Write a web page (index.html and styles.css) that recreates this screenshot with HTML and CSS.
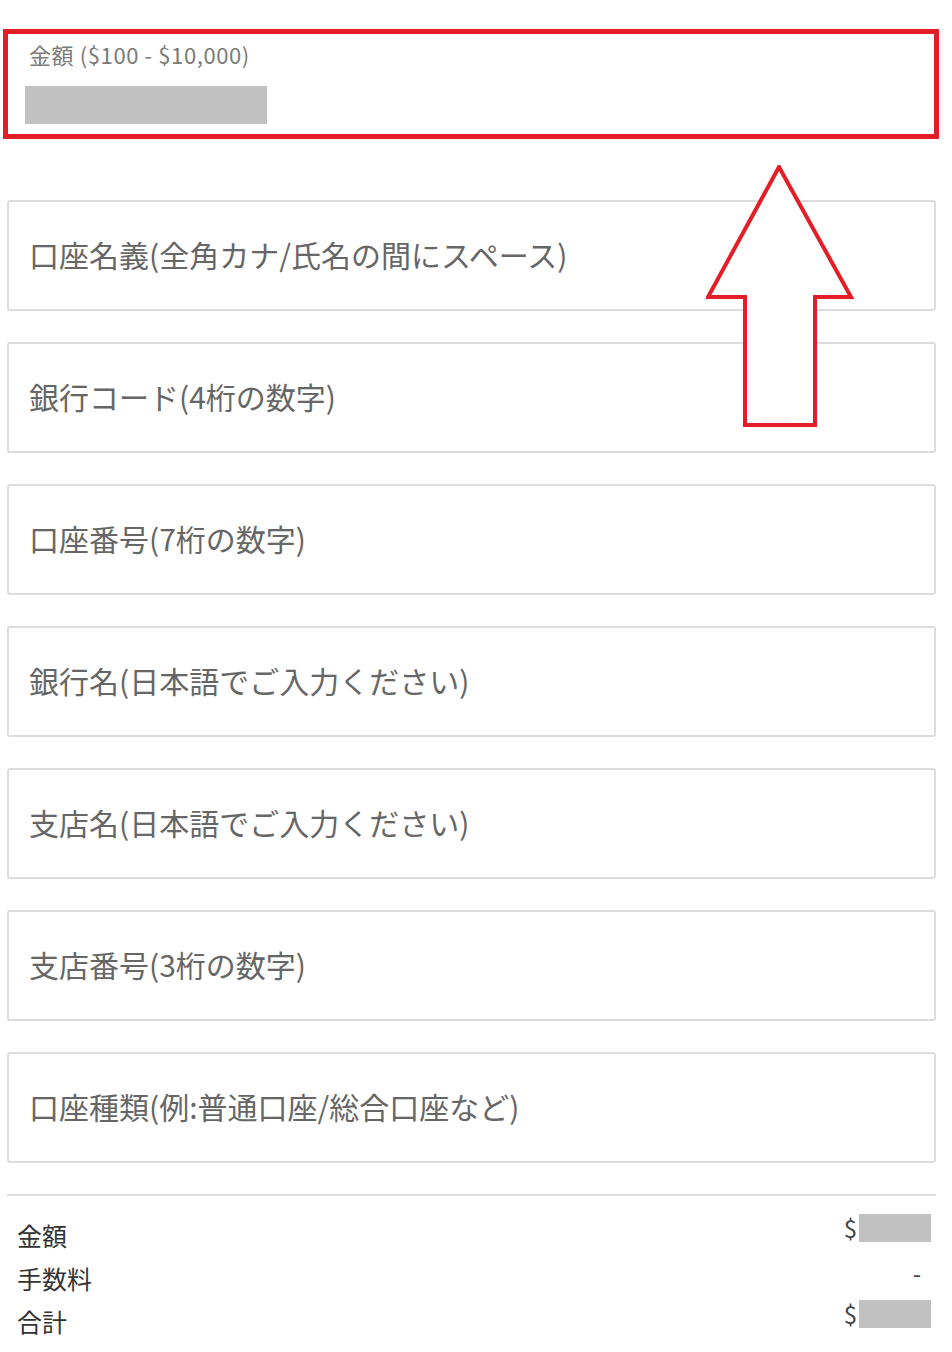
FILE: index.html
```html
<!DOCTYPE html>
<html lang="ja">
  <head>
    <meta charset="UTF-8" />
    <meta name="viewport" content="width=device-width, initial-scale=1.0" />
    <title>出金フォーム</title>
    <link rel="stylesheet" href="styles.css">
  </head>
  <body>
    <div class="page">
      <!-- amount -->
      <div class="amount-field">
        <label class="amount-label">金額 ($100 - $10,000)</label>
        <div class="amount-value"></div>
      </div>

      <!-- bank fields -->
      <div class="fields">
        <div class="field">口座名義(全角カナ/氏名の間にスペース)</div>
        <div class="field">銀行コード(4桁の数字)</div>
        <div class="field">口座番号(7桁の数字)</div>
        <div class="field">銀行名(日本語でご入力ください)</div>
        <div class="field">支店名(日本語でご入力ください)</div>
        <div class="field">支店番号(3桁の数字)</div>
        <div class="field">口座種類(例:普通口座/総合口座など)</div>
      </div>

      <!-- summary -->
      <div class="summary">
        <div class="row">
          <span class="row-label">金額</span>
          <span class="row-value">$<span class="mask"></span></span>
        </div>
        <div class="row">
          <span class="row-label">手数料</span>
          <span class="row-value dash">-</span>
        </div>
        <div class="row">
          <span class="row-label">合計</span>
          <span class="row-value">$<span class="mask"></span></span>
        </div>
      </div>

      <!-- annotation arrow -->
      <svg class="arrow" width="148" height="264" viewBox="0 0 148 264">
        <polygon points="73,2 2,132 39,132 39,260 109,260 109,132 145,132"
          fill="#fff" stroke="#e31e27" stroke-width="4" stroke-linejoin="miter" />
      </svg>
    </div>
  </body>
</html>
```

FILE: styles.css
```css
* {
  margin: 0;
  padding: 0;
  box-sizing: border-box;
}
body {
  font-family: "Noto Sans CJK JP", "Noto Sans", sans-serif;
  background: #fff;
  color: #333;
}
.page {
  position: relative;
  width: 952px;
  min-height: 1352px;
  padding-top: 29px;
}
.amount-field {
  margin: 0 13px 0 3px;
  height: 110px;
  border: 5px solid #e31e27;
  padding: 6px 0 0 17px;
}
.amount-label {
  display: block;
  margin-left: 4px;
  font-size: 22px;
  line-height: 28px;
  letter-spacing: 0.6px;
  color: #7a7a7a;
}
.amount-value {
  margin-top: 18px;
  width: 242px;
  height: 38px;
  background: #c1c1c1;
}
.fields {
  margin: 61px 16px 0 7px;
  display: flex;
  flex-direction: column;
  gap: 31px;
}
.field {
  height: 111px;
  border: 2px solid #dcdcdc;
  border-radius: 3px;
  padding: 0 0 4px 20px;
  display: flex;
  align-items: center;
  font-size: 30px;
  color: #666;
}
.summary {
  margin: 31px 16px 0 7px;
  border-top: 2px solid #dedede;
  padding: 18px 5px 0 10px;
  display: flex;
  flex-direction: column;
}
.row {
  height: 43px;
  display: flex;
  justify-content: space-between;
  align-items: flex-start;
}
.row-label {
  padding-top: 5px;
  font-size: 25px;
  line-height: 32px;
  color: #333;
}
.row-value {
  display: flex;
  align-items: center;
  font-size: 24px;
  line-height: 28px;
  color: #444;
}
.dash {
  padding: 2px 10px 0 0;
}
.mask {
  margin-left: 2px;
  width: 72px;
  height: 28px;
  background: #c1c1c1;
}
.arrow {
  position: absolute;
  left: 706px;
  top: 165px;
}
```
